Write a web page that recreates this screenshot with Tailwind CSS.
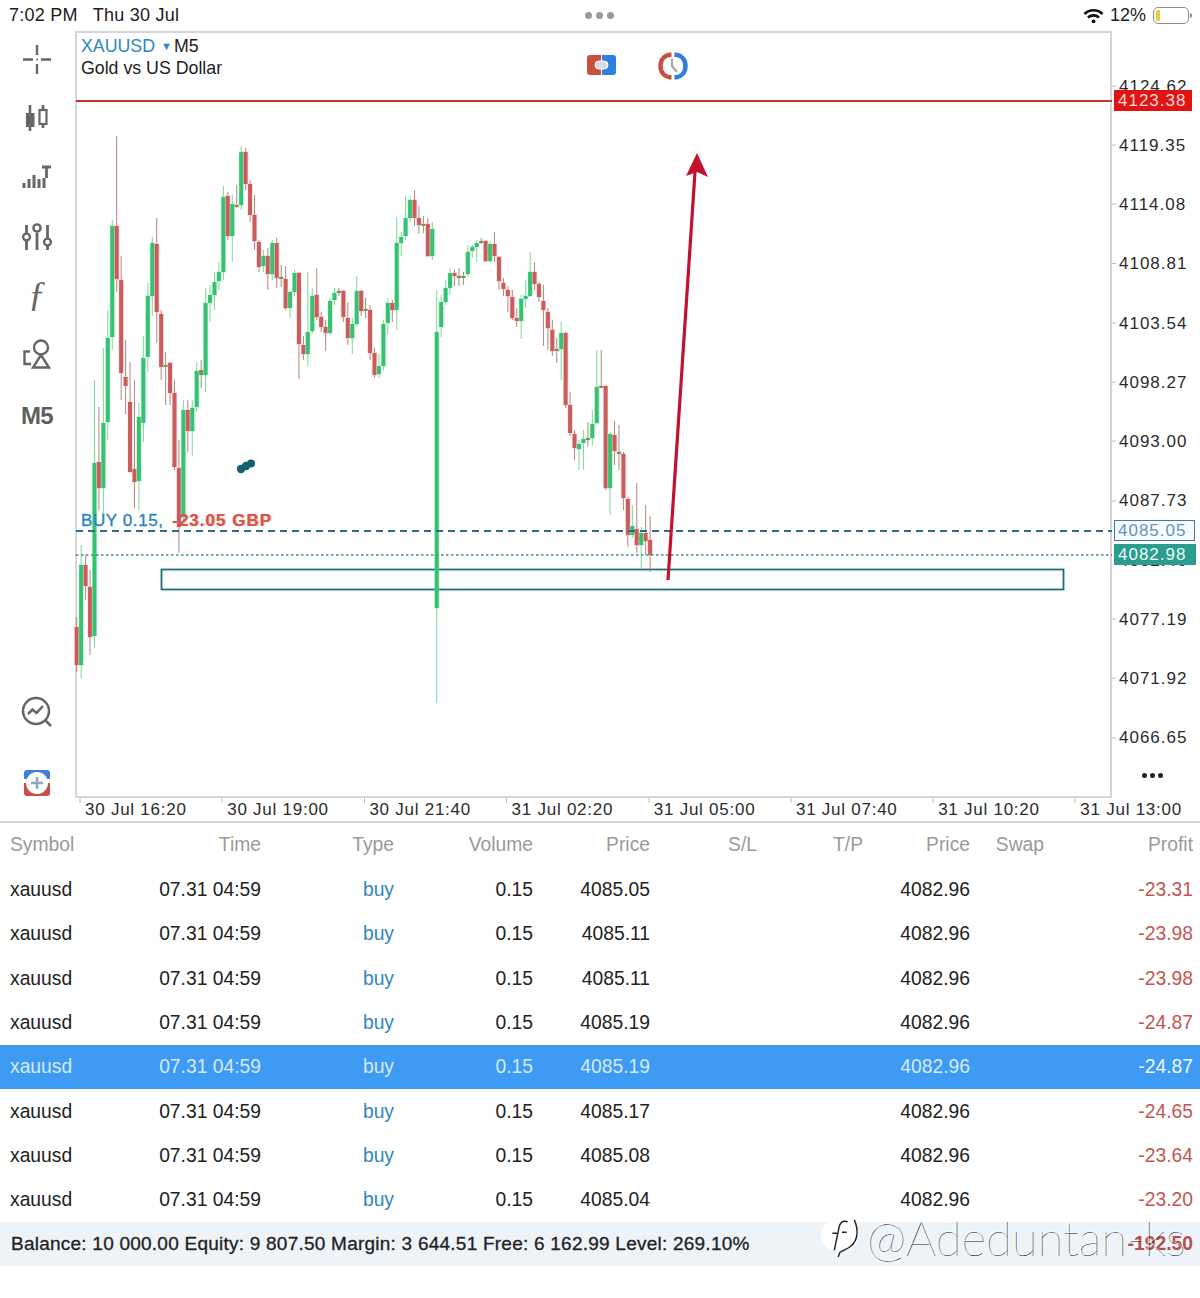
<!DOCTYPE html>
<html lang="en">
<head>
  <meta charset="UTF-8">
  <meta name="viewport" content="width=device-width, initial-scale=1.0">
  <title>XAUUSD M5</title>
  <script src="https://cdn.jsdelivr.net/npm/@tailwindcss/browser@4"></script>
</head>
<body class="bg-white text-[#222] font-['Liberation_Sans',Arial,sans-serif] w-[1200px] h-[1298px] overflow-hidden relative">

  <!-- Status bar -->
  <div class="h-[31px] flex items-center justify-between pl-[9px] pr-[8px] relative">
    <div class="flex gap-[15px] text-[18px] tracking-[0.25px] text-[#1c1c1c]">
      <span>7:02 PM</span>
      <span>Thu 30 Jul</span>
    </div>
    <div class="flex gap-[4px] absolute left-[585px] top-[12px]">
      <span class="w-[7px] h-[7px] rounded-full bg-[#9a9a9a]"></span>
      <span class="w-[7px] h-[7px] rounded-full bg-[#9a9a9a]"></span>
      <span class="w-[7px] h-[7px] rounded-full bg-[#9a9a9a]"></span>
    </div>
    <div class="flex items-center gap-[6px]">
      <svg class="w-[21px] h-[16px]" viewBox="0 0 21 16" fill="none" stroke="#111" stroke-width="2.6">
        <path d="M1.5 6 C6.5 1 14.5 1 19.5 6"/>
        <path d="M5 9.5 C8 6.7 13 6.7 16 9.5"/>
        <circle cx="10.5" cy="13.3" r="1.9" fill="#111" stroke="none"/>
      </svg>
      <span class="text-[18px] text-[#1c1c1c]">12%</span>
      <div class="flex items-center ml-[1px]">
        <div class="w-[36px] h-[17px] rounded-[5px] border border-[#8e8e8e] p-[2px]">
          <div class="w-[4px] h-full rounded-[1px] bg-[#e8cf3a]"></div>
        </div>
        <div class="w-[2px] h-[5px] bg-[#8e8e8e] ml-[1px] rounded-r-sm"></div>
      </div>
    </div>
  </div>

  <!-- Rail, chart and price axis -->
  <div class="flex h-[791px] relative">
    <div class="w-[75px] shrink-0 flex flex-col items-center -mt-[2px] pb-[3.5px] pr-[1px]">
      <div class="h-[59.3px] flex items-center justify-center">
        <svg class="w-[32px] h-[32px]" viewBox="21 43 32 32" stroke="#666" stroke-width="2.4" fill="none">
          <path d="M23 59.5h10M41 59.5h10M37 45v10M37 64v10"/>
          <circle cx="37" cy="59.5" r="1" fill="#666" stroke="none"/>
        </svg>
      </div>
      <div class="h-[59.3px] flex items-center justify-center">
        <svg class="w-[26px] h-[30px]" viewBox="24 103 26 30">
          <path d="M30 105v26" stroke="#666" stroke-width="2.6"/>
          <rect x="26" y="113" width="8.5" height="14" fill="#666"/>
          <path d="M43 105v5M43 124v4" stroke="#666" stroke-width="2.6"/>
          <rect x="39.500" y="110" width="7" height="14" fill="#fff" stroke="#666" stroke-width="2.200"/>
        </svg>
      </div>
      <div class="h-[59.3px] flex items-center justify-center">
        <svg class="w-[32px] h-[26px]" viewBox="21 166 32 26" stroke="#666" fill="none">
          <path d="M24 190v-5M29 190v-9M34 190v-13M39 190v-9M44 190v-10" stroke-width="3"/>
          <path d="M42 169h9M46.500 169v11" stroke-width="2.800"/>
        </svg>
      </div>
      <div class="h-[59.3px] flex items-center justify-center">
        <svg class="w-[32px] h-[32px]" viewBox="21 221 32 32" stroke="#666" fill="#fff" stroke-width="2.400">
          <path d="M26.500 225v25M37 233v17M47.500 225v25" fill="none" stroke-width="2.800"/>
          <circle cx="26.500" cy="237" r="3.400"/>
          <circle cx="37" cy="228" r="3.600"/>
          <circle cx="47.500" cy="242" r="3.400"/>
        </svg>
      </div>
      <div class="h-[59.3px] flex items-center justify-center pb-[4px] text-[36px] italic text-[#666] font-['Liberation_Serif',serif]">ƒ</div>
      <div class="h-[59.3px] flex items-center justify-center">
        <svg class="w-[32px] h-[32px]" viewBox="22 340 32 32" stroke="#666" fill="none" stroke-width="2.400">
          <circle cx="42" cy="348.500" r="7"/>
          <path d="M42 356 L34 368.500 H50 Z"/>
          <path d="M31 352.500 H25.500 V365 H32"/>
        </svg>
      </div>
      <div class="h-[59.3px] flex items-center justify-center pt-[3px] text-[24px] tracking-[-0.6px] font-bold text-[#5f5f5f]">M5</div>
      <div class="mt-auto h-[71px] flex items-center justify-center">
        <svg class="w-[34px] h-[34px]" viewBox="21 695 34 34" fill="none" stroke="#666" stroke-width="2.500">
          <circle cx="37" cy="711" r="13"/>
          <path d="M46.500 720.500 L52 726"/>
          <path d="M29 714 L33.500 709.500 L37.500 713 L44 706"/>
        </svg>
      </div>
      <div class="h-[71px] flex items-center justify-center">
        <svg class="w-[28px] h-[28px]" viewBox="23 769 28 28">
          <path d="M24 786 V773 a3 3 0 0 1 3-3 H47 a3 3 0 0 1 3 3 V779 H24 Z" fill="#3d7fd0"/>
          <path d="M24 783 H50 V793 a3 3 0 0 1-3 3 H27 a3 3 0 0 1-3-3 Z" fill="#c9504a"/>
          <circle cx="37" cy="783" r="11" fill="#fff"/>
          <path d="M37 777v12M31 783h12" stroke="#8fa9bd" stroke-width="2.500"/>
        </svg>
      </div>
    </div>

    <!-- Chart plotted in page coordinates -->
    <div class="w-[1037px] h-[767px] shrink-0 border-2 border-[#d6d6d6] relative">
      <svg id="chart" class="absolute -left-[2px] -top-[2px] w-[1037px] h-[767px] overflow-visible" viewBox="75 31 1037 767" fill="none">
        <rect x="161.500" y="569.500" width="902" height="20" fill="#fcfefe" stroke="#1e6e78" stroke-width="1.800"/>
        <g id="candles"></g>
        <path d="M76 101 H1112" stroke="#c9322c" stroke-width="2"/>
        <path d="M76 531 H1112" stroke="#2c6c94" stroke-width="2" stroke-dasharray="7 5"/>
        <path d="M76 555 H1112" stroke="#3f8f8a" stroke-width="1.500" stroke-dasharray="2.500 2.500"/>
        <path d="M668 580 L695 172" stroke="#c2122f" stroke-width="3.200"/>
        <path d="M697 153 L708 177 L697 172 L686 176 Z" fill="#c2122f"/>
        <g fill="#14606e">
          <circle cx="241" cy="469" r="4.200"/><circle cx="246" cy="466" r="4.200"/><circle cx="251" cy="463.500" r="4"/>
        </g>
        <path d="M80 798v5M222 798v5M364.500 798v5M506.500 798v5M649 798v5M791 798v5M933 798v5M1075 798v5" stroke="#bdbdbd" stroke-width="1"/>
        <path d="M1112 86h4M1112 145h4M1112 204h4M1112 263.500h4M1112 323h4M1112 382h4M1112 441h4M1112 501h4M1112 619h4M1112 678h4M1112 738h4" stroke="#bdbdbd" stroke-width="1"/>
      </svg>
      <div class="absolute left-[4px] top-[2px] leading-[22px] text-[17.75px] text-[#1c1c1c]">
        <div class="flex items-center">
          <span class="text-[#2f87c0]">XAUUSD</span>
          <span class="text-[#2f87c0] text-[11px] ml-[6px] mr-[2px]">▼</span>
          <span>M5</span>
        </div>
        <div>Gold vs US Dollar</div>
      </div>
      <svg class="absolute left-[509px] top-[20px] w-[32px] h-[24px]" viewBox="0 0 32 24">
        <path d="M1 5 a3 3 0 0 1 3-3 H15 V22 H4 a3 3 0 0 1-3-3 Z" fill="#c9503f"/>
        <path d="M16 2 H27 a3 3 0 0 1 3 3 V19 a3 3 0 0 1-3 3 H16 Z" fill="#2f7fdc"/>
        <rect x="9" y="8" width="13" height="8" rx="4" fill="#d8dde2" stroke="#fff"/>
      </svg>
      <svg class="absolute left-[581px] top-[19px] w-[30px] h-[28px]" viewBox="0 0 30 28" fill="none">
        <path d="M13.500 2.500 C6 3 2.500 8 2.500 14 C2.500 20 6 25 13.500 25.500" stroke="#c9503f" stroke-width="4.500"/>
        <path d="M16.500 2.500 C24 3 27.500 8 27.500 14 C27.500 20 24 25 16.500 25.500" stroke="#2f7fdc" stroke-width="4.500"/>
        <path d="M14 7 V14 L19 20" stroke="#a9a9a9" stroke-width="2.200"/>
      </svg>
      <div class="absolute left-[4px] top-[478px] text-[17px] tracking-[0.6px] leading-[20px] whitespace-nowrap text-[#2f87c0] [-webkit-text-stroke:0.4px_#2f87c0]">BUY 0.15,</div>
      <div class="absolute left-[95px] top-[478px] text-[17px] tracking-[1px] leading-[20px] whitespace-nowrap text-[#d2574f] font-bold [text-shadow:1px_0_1px_#e58f88]">-23.05 GBP</div>
    </div>

    <!-- Price axis -->
    <div class="flex-1 pt-[25.500px] pl-[7px] text-[17px] tracking-[1px] text-[#2b2b2b] leading-[59.250px]">
      <div class="h-[59.250px]">4124.62</div>
      <div class="h-[59.250px]">4119.35</div>
      <div class="h-[59.250px]">4114.08</div>
      <div class="h-[59.250px]">4108.81</div>
      <div class="h-[59.250px]">4103.54</div>
      <div class="h-[59.250px]">4098.27</div>
      <div class="h-[59.250px]">4093.00</div>
      <div class="h-[59.250px]">4087.73</div>
      <div class="h-[59.250px]">4082.46</div>
      <div class="h-[59.250px]">4077.19</div>
      <div class="h-[59.250px]">4071.92</div>
      <div class="h-[59.250px]">4066.65</div>
    </div>

    <!-- Price tags over the axis -->
    <div class="absolute left-[1114px] top-[59px] w-[78px] h-[21px] bg-[#e01414] text-[#ffd9d4] text-[17px] tracking-[1px] leading-[21px] pl-[4px]">4123.38</div>
    <div class="absolute left-[1114px] top-[489px] w-[81px] h-[21px] bg-[#f6fbff] border border-[#3f78ad] text-[#6a93b8] text-[17px] tracking-[1px] leading-[19px] pl-[3px]">4085.05</div>
    <div class="absolute left-[1114px] top-[513px] w-[82px] h-[21px] bg-[#2a9d8f] text-[#eafaf7] text-[17px] tracking-[1px] leading-[21px] pl-[4px]">4082.98</div>
    <div class="absolute left-[1142px] top-[742px] flex gap-[3px]">
      <span class="w-[5px] h-[5px] rounded-full bg-[#222]"></span>
      <span class="w-[5px] h-[5px] rounded-full bg-[#222]"></span>
      <span class="w-[5px] h-[5px] rounded-full bg-[#222]"></span>
    </div>

    <!-- Time axis -->
    <div class="absolute left-[85px] top-[767px] h-[24px] flex text-[17px] tracking-[0.75px] leading-[24px] text-[#2b2b2b] whitespace-nowrap">
      <span class="w-[142.200px]">30 Jul 16:20</span>
      <span class="w-[142.200px]">30 Jul 19:00</span>
      <span class="w-[142.200px]">30 Jul 21:40</span>
      <span class="w-[142.200px]">31 Jul 02:20</span>
      <span class="w-[142.200px]">31 Jul 05:00</span>
      <span class="w-[142.200px]">31 Jul 07:40</span>
      <span class="w-[142.200px]">31 Jul 10:20</span>
      <span class="w-[120px]">31 Jul 13:00</span>
    </div>
  </div>

  <div class="h-[2px] bg-[#d4d4d4] -mt-[1px]"></div>

  <!-- Positions table -->
  <div class="text-[19.3px]">
    <div class="grid grid-cols-[100px_151px_133px_139px_117px_107px_106px_107px_74px_149px] pl-[10px] h-[44px] items-center text-right text-[#9a9a9a]">
      <span class="text-left">Symbol</span><span>Time</span><span>Type</span><span>Volume</span><span>Price</span><span>S/L</span><span>T/P</span><span>Price</span><span>Swap</span><span>Profit</span>
    </div>
    <div class="grid grid-cols-[100px_151px_133px_139px_117px_107px_106px_107px_74px_149px] pl-[10px] pt-[2px] h-[44.400px] items-center text-right">
      <span class="text-left">xauusd</span><span>07.31 04:59</span><span class="text-[#2f87c0]">buy</span><span>0.15</span><span>4085.05</span><span></span><span></span><span>4082.96</span><span></span><span class="text-[#c4564f]">-23.31</span>
    </div>
    <div class="grid grid-cols-[100px_151px_133px_139px_117px_107px_106px_107px_74px_149px] pl-[10px] pt-[2px] h-[44.400px] items-center text-right">
      <span class="text-left">xauusd</span><span>07.31 04:59</span><span class="text-[#2f87c0]">buy</span><span>0.15</span><span>4085.11</span><span></span><span></span><span>4082.96</span><span></span><span class="text-[#c4564f]">-23.98</span>
    </div>
    <div class="grid grid-cols-[100px_151px_133px_139px_117px_107px_106px_107px_74px_149px] pl-[10px] pt-[2px] h-[44.400px] items-center text-right">
      <span class="text-left">xauusd</span><span>07.31 04:59</span><span class="text-[#2f87c0]">buy</span><span>0.15</span><span>4085.11</span><span></span><span></span><span>4082.96</span><span></span><span class="text-[#c4564f]">-23.98</span>
    </div>
    <div class="grid grid-cols-[100px_151px_133px_139px_117px_107px_106px_107px_74px_149px] pl-[10px] pt-[2px] h-[44.400px] items-center text-right">
      <span class="text-left">xauusd</span><span>07.31 04:59</span><span class="text-[#2f87c0]">buy</span><span>0.15</span><span>4085.19</span><span></span><span></span><span>4082.96</span><span></span><span class="text-[#c4564f]">-24.87</span>
    </div>
    <div class="grid grid-cols-[100px_151px_133px_139px_117px_107px_106px_107px_74px_149px] pl-[10px] pt-[2px] h-[44.400px] items-center text-right bg-[#3d9bf3] text-[#d5e9fc]">
      <span class="text-left">xauusd</span><span>07.31 04:59</span><span>buy</span><span>0.15</span><span>4085.19</span><span></span><span></span><span>4082.96</span><span></span><span class="text-[#f2f8fe]">-24.87</span>
    </div>
    <div class="grid grid-cols-[100px_151px_133px_139px_117px_107px_106px_107px_74px_149px] pl-[10px] pt-[2px] h-[44.400px] items-center text-right">
      <span class="text-left">xauusd</span><span>07.31 04:59</span><span class="text-[#2f87c0]">buy</span><span>0.15</span><span>4085.17</span><span></span><span></span><span>4082.96</span><span></span><span class="text-[#c4564f]">-24.65</span>
    </div>
    <div class="grid grid-cols-[100px_151px_133px_139px_117px_107px_106px_107px_74px_149px] pl-[10px] pt-[2px] h-[44.400px] items-center text-right">
      <span class="text-left">xauusd</span><span>07.31 04:59</span><span class="text-[#2f87c0]">buy</span><span>0.15</span><span>4085.08</span><span></span><span></span><span>4082.96</span><span></span><span class="text-[#c4564f]">-23.64</span>
    </div>
    <div class="grid grid-cols-[100px_151px_133px_139px_117px_107px_106px_107px_74px_149px] pl-[10px] pt-[2px] h-[44.400px] items-center text-right">
      <span class="text-left">xauusd</span><span>07.31 04:59</span><span class="text-[#2f87c0]">buy</span><span>0.15</span><span>4085.04</span><span></span><span></span><span>4082.96</span><span></span><span class="text-[#c4564f]">-23.20</span>
    </div>
    <!-- Totals -->
    <div class="h-[44px] bg-[#eef3f8] flex items-center justify-between pl-[11px] pr-[7px]">
      <span class="text-[19px] tracking-[0.235px] [-webkit-text-stroke:0.3px_#222] whitespace-nowrap">Balance: 10 000.00 Equity: 9 807.50 Margin: 3 644.51 Free: 6 162.99 Level: 269.10%</span>
      <span class="text-[#b5504f] font-bold">-192.50</span>
    </div>
  </div>

  <!-- Watermark -->
  <div class="absolute left-[820px] top-[1212px] flex items-center gap-[6px] pointer-events-none">
    <svg class="w-[40px] h-[46px]" viewBox="0 0 42 46" fill="none">
      <path d="M21 3 C33 3 41 11 41 21 C41 31 33 36 24 38 L17 44 L18 38 C8 37 1 31 1 21 C1 11 9 3 21 3 Z" fill="#fff"/>
      <path d="M36 5 C40 14 41 26 32 33 C28 36 24 37 21 39 L19 44" stroke="#222" stroke-width="1.500"/>
      <path d="M29 7 C24 5 21 8 20 13 L15 37 M13 19 H19 M23 18 H28" stroke="#222" stroke-width="1.500"/>
    </svg>
    <span class="font-['Lato',sans-serif] font-thin text-[47.500px] leading-[50px] text-white whitespace-nowrap [text-shadow:1px_0.5px_0_#111]">@Adeduntan-ks</span>
  </div>

  <script>
    // [type, body top, body bottom, wick high, wick low]  g = up, r = down, d = doji
    const candles = [
      ['r',627,665,617,672],['g',565,665,545,678],['r',565,586,555,600],['r',587,637,570,655],['g',463,636,380,648],['r',462,488,407,510],
      ['g',423,488,348,515],['g',338,422,310,440],['g',226,337,220,350],['r',226,279,136,292],['r',280,373,256,400],['r',377,386,340,414],
      ['r',402,472,362,440],['r',469,482,380,508],['g',417,481,403,510],['g',358,423,336,442],['g',296,357,283,372],['g',243,296,237,316],
      ['r',244,312,218,343],['r',314,367,310,380],['d',365,366,352,405],['r',363,393,362,405],['r',393,467,380,470],['r',468,527,440,553],
      ['g',410,517,400,522],['r',410,431,400,452],['g',408,431,400,456],['g',371,407,362,412],['d',370,375,360,388],['g',303,375,288,392],
      ['g',295,303,285,322],['g',282,295,272,310],['g',272,281,262,290],['g',197,272,186,280],['r',196,236,192,240],['g',204,236,195,262],
      ['d',205,206,185,208],['g',152,205,146,210],['r',152,184,148,190],['r',184,215,180,222],['r',215,241,195,250],['r',242,267,240,272],
      ['g',256,266,250,272],['r',256,274,248,290],['g',243,274,240,280],['r',243,278,238,288],['d',277,278,265,287],['r',279,308,266,310],
      ['g',292,308,290,318],['g',273,292,270,296],['r',273,344,272,379],['r',345,354,336,360],['g',332,354,272,366],['g',296,331,288,334],
      ['r',295,317,268,320],['r',317,327,312,332],['r',327,333,320,351],['g',301,333,298,335],['g',293,300,288,305],['d',291,292,288,296],
      ['r',291,317,290,322],['r',318,338,302,345],['g',324,338,318,354],['g',291,324,276,326],['r',291,311,290,316],['d',309,310,298,318],
      ['r',310,353,305,360],['r',353,375,348,378],['g',366,374,354,378],['g',324,366,320,370],['g',303,323,298,334],['r',303,310,300,322],
      ['g',243,310,217,330],['g',237,243,232,256],['g',218,236,196,240],['g',200,218,196,222],['r',200,218,190,226],['r',218,225,206,234],
      ['d',224,225,216,233],['r',224,256,218,257],['g',229,256,222,260],['g',332,608,290,703],['g',302,327,295,337],['g',288,302,280,305],
      ['g',273,288,268,295],['r',273,276,270,286],['d',276,277,268,286],['d',276,277,272,285],['g',252,274,245,276],['g',247,251,245,258],
      ['g',243,247,240,262],['d',241,242,238,244],['r',241,261,240,262],['g',244,261,241,262],['r',244,256,232,262],['r',257,281,256,290],
      ['r',283,289,278,296],['r',290,296,286,312],['r',297,318,290,320],['r',318,321,308,327],['g',299,321,295,339],['g',296,299,280,308],
      ['g',272,296,252,297],['r',272,284,262,290],['r',284,297,282,302],['r',301,310,285,346],['r',312,328,308,350],['r',330,351,320,356],
      ['d',349,350,338,363],['g',333,349,322,380],['r',333,405,332,408],['r',405,433,392,436],['r',434,448,430,460],['g',444,449,440,470],
      ['g',439,443,430,470],['d',438,439,422,446],['g',424,438,410,446],['g',387,423,350,424],['d',386,387,350,388],['r',386,488,385,490],
      ['g',434,488,432,515],['r',435,451,421,465],['d',452,453,425,470],['r',454,498,452,510],['r',499,535,497,547],['g',526,535,505,538],
      ['r',529,545,483,553],['g',533,545,527,568],['r',533,541,505,555],['r',540,555,516,572],
    ];

    const NS = 'http://www.w3.org/2000/svg';
    const group = document.getElementById('candles');

    function addRect(x, y, w, h, fill, opacity) {
      const r = document.createElementNS(NS, 'rect');
      r.setAttribute('x', x);
      r.setAttribute('y', y);
      r.setAttribute('width', w);
      r.setAttribute('height', h);
      r.setAttribute('fill', fill);
      r.setAttribute('opacity', opacity);
      group.appendChild(r);
    }

    candles.forEach(([type, top, bottom, high, low], i) => {
      const x = 76.7 + 4.445 * i;
      const body = type === 'g' ? '#37c172' : type === 'r' ? '#cc5b5b' : '#7f8f55';
      const wick = type === 'g' ? '#6fd48f' : type === 'r' ? '#b27474' : '#8e8a6a';
      addRect(x - 0.5, high, 1, low - high, wick, 0.9);
      addRect(x - 2.8, top - 1, 5.6, bottom - top + 2, type === 'g' ? '#9aefb6' : '#f0b5b0', 0.35);
      addRect(x - 2, top, 4, Math.max(bottom - top, 2), body, 1);
    });
  </script>

</body>
</html>
